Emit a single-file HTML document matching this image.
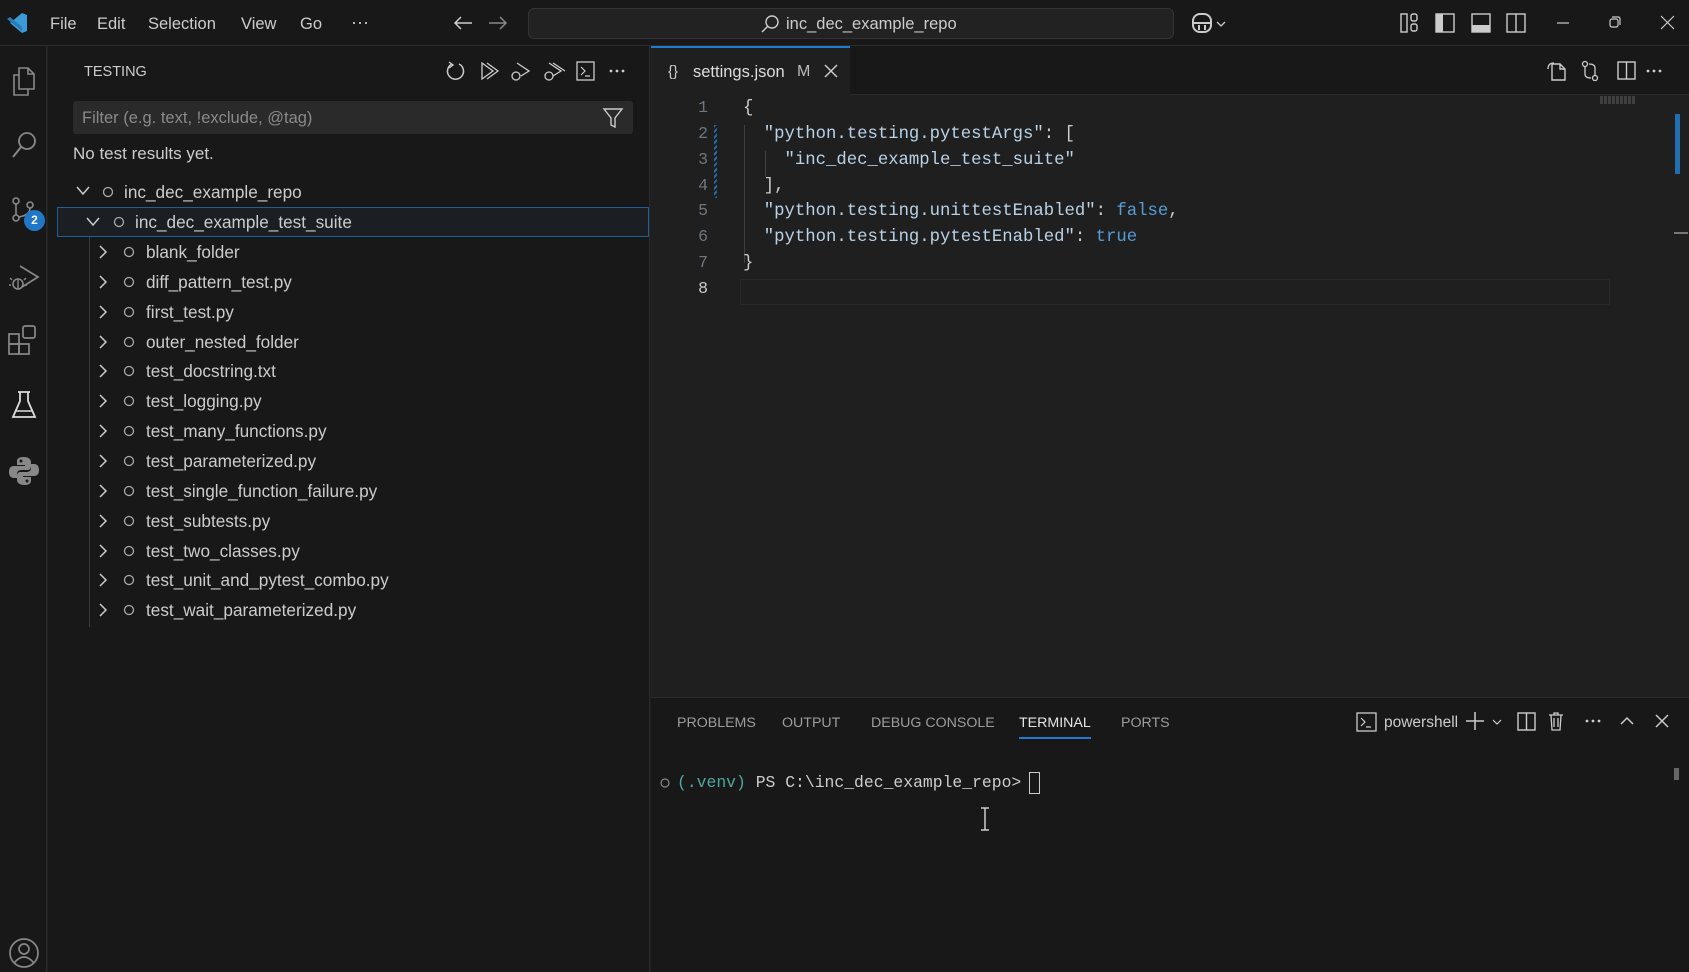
<!DOCTYPE html>
<html><head><meta charset="utf-8"><style>
*{margin:0;padding:0;box-sizing:border-box}
body{width:1689px;height:972px;overflow:hidden;background:#1f1f1f;font-family:"Liberation Sans",sans-serif;color:#ccc;position:relative}
.a{position:absolute}
.t{position:absolute;white-space:nowrap;line-height:1}
svg{position:absolute;overflow:visible}
.mono{font-family:"Liberation Mono",monospace}
</style></head><body>
<!-- title bar -->
<div class="a" style="left:0;top:0;width:1689px;height:46px;background:#181818;border-bottom:1px solid #2b2b2b"></div>
<svg style="left:6px;top:11px" width="22" height="24" viewBox="0 0 22 24"><path d="M16 2 L21 4 V20 L16 22 L4 12 Z M16 7 V17 L9 12 Z" fill="#3b9bd9"/><path d="M1 8 L4 6 L16 16 V20 Z" fill="#2a7ab8"/></svg>
<div class="t" style="left:50px;top:16px;font-size:16.5px;color:#ccc">File</div>
<div class="t" style="left:97px;top:16px;font-size:16.5px;color:#ccc">Edit</div>
<div class="t" style="left:148px;top:16px;font-size:16.5px;color:#ccc">Selection</div>
<div class="t" style="left:241px;top:16px;font-size:16.5px;color:#ccc">View</div>
<div class="t" style="left:300px;top:16px;font-size:16.5px;color:#ccc">Go</div>
<div class="t" style="left:351px;top:13px;font-size:18px;color:#ccc">···</div>
<svg style="left:453px;top:15px" width="20" height="16"><path d="M19 8H2M8 2L2 8L8 14" stroke="#ccc" stroke-width="1.5" fill="none"/></svg>
<svg style="left:488px;top:15px" width="20" height="16"><path d="M1 8H18M12 2L18 8L12 14" stroke="#888" stroke-width="1.5" fill="none"/></svg>
<div class="a" style="left:528px;top:8px;width:646px;height:31px;background:#222;border:1px solid #333;border-radius:6px"></div>
<svg style="left:760px;top:14px" width="20" height="20"><circle cx="12" cy="8" r="6" stroke="#ccc" stroke-width="1.4" fill="none"/><path d="M8 12L2 18" stroke="#ccc" stroke-width="1.5"/></svg>
<div class="t" style="left:786px;top:16px;font-size:16.5px;color:#ccc">inc_dec_example_repo</div>
<svg style="left:1192px;top:12px" width="40" height="22"><rect x="1" y="2" width="18" height="18" rx="7" stroke="#ccc" stroke-width="2" fill="none"/><path d="M1 11H19M7 13V18M13 13V18" stroke="#ccc" stroke-width="2"/><path d="M25 10L29 14L33 10" stroke="#ccc" stroke-width="1.3" fill="none"/></svg>
<svg style="left:1400px;top:13px" width="20" height="20"><rect x="1" y="1" width="6" height="18" stroke="#ccc" stroke-width="1.4" fill="none"/><rect x="11" y="1" width="6" height="7" rx="2" stroke="#ccc" stroke-width="1.4" fill="none"/><rect x="11" y="11" width="6" height="7" rx="2" stroke="#ccc" stroke-width="1.4" fill="none"/></svg>
<svg style="left:1435px;top:13px" width="20" height="20"><rect x="1" y="1" width="18" height="18" stroke="#ccc" stroke-width="1.4" fill="none"/><rect x="1" y="1" width="7" height="18" fill="#ccc"/></svg>
<svg style="left:1471px;top:13px" width="20" height="20"><rect x="1" y="1" width="18" height="18" stroke="#ccc" stroke-width="1.4" fill="none"/><rect x="1" y="12" width="18" height="7" fill="#ccc"/></svg>
<svg style="left:1506px;top:13px" width="20" height="20"><rect x="1" y="1" width="18" height="18" stroke="#ccc" stroke-width="1.4" fill="none"/><path d="M10 1V19" stroke="#ccc" stroke-width="1.4"/></svg>
<svg style="left:1557px;top:22px" width="12" height="2"><path d="M0 1H12" stroke="#ccc" stroke-width="1.2"/></svg>
<svg style="left:1609px;top:16px" width="12" height="12"><rect x="1" y="3" width="8" height="8" rx="2" stroke="#ccc" stroke-width="1.2" fill="none"/><path d="M3 1H9Q11 1 11 3V9" stroke="#ccc" stroke-width="1.2" fill="none"/></svg>
<svg style="left:1661px;top:16px" width="13" height="13"><path d="M0 0L13 13M13 0L0 13" stroke="#ccc" stroke-width="1.2"/></svg>

<!-- activity bar -->
<div class="a" style="left:0;top:46px;width:47px;height:926px;background:#181818;border-right:1px solid #2b2b2b"></div>
<svg style="left:10px;top:67px" width="28" height="30"><path d="M9 1H18L24 7V22H9Z M18 1V7H24" stroke="#888" stroke-width="1.6" fill="none"/><path d="M9 8H4V28H18V22" stroke="#888" stroke-width="1.6" fill="none"/></svg>
<svg style="left:10px;top:130px" width="28" height="30"><circle cx="17" cy="11" r="8" stroke="#888" stroke-width="1.8" fill="none"/><path d="M11 17L3 27" stroke="#888" stroke-width="2"/></svg>
<svg style="left:10px;top:196px" width="30" height="30"><circle cx="6" cy="5" r="3" stroke="#888" stroke-width="1.6" fill="none"/><circle cx="6" cy="22" r="3" stroke="#888" stroke-width="1.6" fill="none"/><circle cx="20" cy="9" r="3" stroke="#888" stroke-width="1.6" fill="none"/><path d="M6 8V19M20 12Q20 19 9 21" stroke="#888" stroke-width="1.6" fill="none"/></svg>
<div class="a" style="left:24px;top:210px;width:21px;height:21px;border-radius:50%;background:#1f77c8;color:#fff;font-size:12px;font-weight:bold;text-align:center;line-height:21px">2</div>
<svg style="left:8px;top:262px" width="32" height="30"><path d="M12 4L30 15L14 25" stroke="#888" stroke-width="1.7" fill="none"/><circle cx="10" cy="22" r="5" stroke="#888" stroke-width="1.6" fill="none"/><path d="M4 18L2 16M16 18L18 16M3 23H1M17 23H19M10 17V27" stroke="#888" stroke-width="1.4"/></svg>
<svg style="left:8px;top:324px" width="32" height="32"><rect x="1" y="10" width="10" height="10" stroke="#888" stroke-width="1.7" fill="none"/><rect x="1" y="20" width="10" height="10" stroke="#888" stroke-width="1.7" fill="none"/><rect x="11" y="20" width="10" height="10" stroke="#888" stroke-width="1.7" fill="none"/><rect x="15" y="2" width="12" height="12" rx="2" stroke="#888" stroke-width="1.7" fill="none"/></svg>
<svg style="left:11px;top:390px" width="26" height="30"><path d="M7 2H19M9 2V11L2 27H24L17 11V2" stroke="#ddd" stroke-width="1.8" fill="none"/><path d="M4 21H22" stroke="#ddd" stroke-width="1.5"/></svg>
<svg style="left:8px;top:455px" width="32" height="32"><path d="M16 2C9 2 9 5 9 7V10H17V11H6C2 11 1 14 1 17C1 21 3 23 6 23H9V19C9 16 11 15 14 15H20C22 15 23 13 23 11V7C23 4 20 2 16 2Z" fill="#888"/><path d="M16 30C23 30 23 27 23 25V22H15V21H26C30 21 31 18 31 15C31 11 29 9 26 9H23V13C23 16 21 17 18 17H12C10 17 9 19 9 21V25C9 28 12 30 16 30Z" fill="#888"/><circle cx="13" cy="6" r="1.5" fill="#181818"/><circle cx="19" cy="26" r="1.5" fill="#181818"/></svg>
<svg style="left:8px;top:937px" width="32" height="32"><circle cx="16" cy="16" r="14" stroke="#888" stroke-width="1.7" fill="none"/><circle cx="16" cy="12" r="5" stroke="#888" stroke-width="1.7" fill="none"/><path d="M6 26Q16 14 26 26" stroke="#888" stroke-width="1.7" fill="none"/></svg>

<!-- sidebar -->
<div class="a" style="left:48px;top:46px;width:602px;height:926px;background:#181818;border-right:1px solid #2b2b2b"></div>
<div class="t" style="left:84px;top:65px;font-size:14.5px;color:#ccc">TESTING</div>
<svg style="left:447px;top:61px" width="180" height="20"><path d="M5 3A8 8 0 1 0 12 3" stroke="#ccc" stroke-width="1.5" fill="none"/><path d="M2 1L6 4L2 7" stroke="#ccc" stroke-width="1.4" fill="none"/>
<path d="M35 2V18L46 10Z M40 2L51 10L40 18" stroke="#ccc" stroke-width="1.3" fill="none"/>
<path d="M70 2L82 10L74 15" stroke="#ccc" stroke-width="1.3" fill="none"/><circle cx="69" cy="15" r="4" stroke="#ccc" stroke-width="1.3" fill="none"/>
<path d="M102 2L114 10L106 15 M106 2L118 10" stroke="#ccc" stroke-width="1.3" fill="none"/><circle cx="102" cy="15" r="4" stroke="#ccc" stroke-width="1.3" fill="none"/>
<rect x="130" y="1" width="17" height="18" stroke="#ccc" stroke-width="1.3" fill="none"/><path d="M134 6L138 10L134 14M138 15H143" stroke="#ccc" stroke-width="1.2" fill="none"/>
<circle cx="164" cy="10" r="1.4" fill="#ccc"/><circle cx="170" cy="10" r="1.4" fill="#ccc"/><circle cx="176" cy="10" r="1.4" fill="#ccc"/></svg>
<div class="a" style="left:73px;top:101px;width:560px;height:33px;background:#2a2a2a;border-radius:3px"></div>
<div class="t" style="left:82px;top:110px;font-size:16.5px;color:#8a8a8a">Filter (e.g. text, !exclude, @tag)</div>
<svg style="left:603px;top:108px" width="20" height="20"><path d="M1 1H19L12 10V19L8 17V10Z" stroke="#ccc" stroke-width="1.4" fill="none"/></svg>
<div class="t" style="left:73px;top:145px;font-size:17px;color:#ccc">No test results yet.</div>
<div class="a" style="left:57px;top:207px;width:592px;height:30px;border:1px solid #1f5f96;background:#1b1f24"></div>
<div class="a" style="left:89px;top:237px;width:1px;height:390px;background:#3a3a3a"></div>
<svg style="left:76px;top:186px" width="14" height="10"><path d="M1 1L7 8L13 1" stroke="#ccc" stroke-width="1.5" fill="none"/></svg>
<svg style="left:102px;top:186px" width="12" height="12"><circle cx="6" cy="6" r="4.5" stroke="#aaa" stroke-width="1.3" fill="none"/></svg>
<div class="t" style="left:124px;top:184px;font-size:17.2px;color:#ccc">inc_dec_example_repo</div>
<svg style="left:86px;top:217px" width="14" height="10"><path d="M1 1L7 8L13 1" stroke="#ccc" stroke-width="1.5" fill="none"/></svg>
<svg style="left:113px;top:216px" width="12" height="12"><circle cx="6" cy="6" r="4.5" stroke="#aaa" stroke-width="1.3" fill="none"/></svg>
<div class="t" style="left:135px;top:214px;font-size:17.2px;color:#ccc">inc_dec_example_test_suite</div>
<div id="tree"></div>

<!-- editor -->
<div class="a" style="left:651px;top:46px;width:1038px;height:49px;background:#181818;border-bottom:1px solid #2b2b2b"></div>
<div class="a" style="left:651px;top:46px;width:199px;height:50px;background:#1f1f1f;border-top:2px solid #1f7ad0"></div>
<div class="t" style="left:668px;top:64px;font-size:15px;color:#ccc">{}</div>
<div class="t" style="left:693px;top:64px;font-size:16.5px;color:#ddd">settings.json</div>
<div class="t" style="left:797px;top:64px;font-size:16px;color:#bbb">M</div>
<svg style="left:825px;top:65px" width="12" height="12"><path d="M0 0L12 12M12 0L0 12" stroke="#ccc" stroke-width="1.5"/></svg>
<svg style="left:1545px;top:60px" width="120" height="22"><path d="M7 4H15L20 9V20H7Z M15 4V9H20" stroke="#ccc" stroke-width="1.4" fill="none"/><path d="M3 9Q3 3 9 3" stroke="#ccc" stroke-width="1.3" fill="none"/>
<circle cx="40" cy="4" r="2.5" stroke="#ccc" stroke-width="1.3" fill="none"/><circle cx="50" cy="18" r="2.5" stroke="#ccc" stroke-width="1.3" fill="none"/><path d="M40 7V14Q40 18 46 18M50 15V8Q50 4 44 4" stroke="#ccc" stroke-width="1.3" fill="none"/>
<rect x="73" y="2" width="17" height="17" stroke="#ccc" stroke-width="1.4" fill="none"/><path d="M81.5 2V19" stroke="#ccc" stroke-width="1.4"/>
<circle cx="103" cy="11" r="1.4" fill="#ccc"/><circle cx="109" cy="11" r="1.4" fill="#ccc"/><circle cx="115" cy="11" r="1.4" fill="#ccc"/></svg>
<div class="a" style="left:740px;top:279px;width:870px;height:26px;border:1px solid #282828"></div>
<div class="a" style="left:714px;top:125px;width:3px;height:73px;background:repeating-linear-gradient(135deg,#1f6fb0 0 2px,transparent 2px 4px)"></div>
<div class="a" style="left:744px;top:125px;width:1px;height:138px;background:#404040"></div>
<div class="a" style="left:765px;top:151px;width:1px;height:26px;background:#404040"></div>
<div class="a" style="left:1675px;top:114px;width:5px;height:60px;background:#1f6fb0"></div>
<div class="a" style="left:1674px;top:232px;width:14px;height:2px;background:#777"></div>
<div class="a" style="left:1600px;top:96px;width:36px;height:8px;background:repeating-linear-gradient(90deg,#555 0 3px,transparent 3px 4px);opacity:.6"></div>
<div id="code" class="mono"></div>

<!-- panel -->
<div class="a" style="left:651px;top:697px;width:1038px;height:275px;background:#181818;border-top:1px solid #2b2b2b"></div>
<div class="t" style="left:677px;top:716px;font-size:14.2px;color:#9d9d9d">PROBLEMS</div>
<div class="t" style="left:782px;top:716px;font-size:14.2px;color:#9d9d9d">OUTPUT</div>
<div class="t" style="left:871px;top:716px;font-size:14.2px;color:#9d9d9d">DEBUG CONSOLE</div>
<div class="t" style="left:1019px;top:716px;font-size:14.2px;color:#e6e6e6">TERMINAL</div>
<div class="a" style="left:1019px;top:737px;width:72px;height:2px;background:#1f7ad0"></div>
<div class="t" style="left:1121px;top:716px;font-size:14.2px;color:#9d9d9d">PORTS</div>
<svg style="left:1356px;top:712px" width="22" height="20"><rect x="1" y="1" width="19" height="18" stroke="#ccc" stroke-width="1.3" fill="none"/><path d="M5 6L9 10L5 14M10 15H15" stroke="#ccc" stroke-width="1.2" fill="none"/></svg>
<div class="t" style="left:1384px;top:715px;font-size:15.5px;color:#ccc">powershell</div>
<svg style="left:1465px;top:711px" width="200" height="22"><path d="M1 10H19M10 1V19" stroke="#ccc" stroke-width="1.5"/><path d="M28 9L32 13L36 9" stroke="#ccc" stroke-width="1.2" fill="none"/>
<rect x="53" y="2" width="17" height="17" stroke="#ccc" stroke-width="1.4" fill="none"/><path d="M61.5 2V19" stroke="#ccc" stroke-width="1.4"/>
<path d="M84 4H98M89 4V2H93V4M86 4L87 19H95L96 4M89 7V16M93 7V16" stroke="#ccc" stroke-width="1.3" fill="none"/>
<circle cx="122" cy="10" r="1.4" fill="#ccc"/><circle cx="128" cy="10" r="1.4" fill="#ccc"/><circle cx="134" cy="10" r="1.4" fill="#ccc"/>
<path d="M156 13L162 7L168 13" stroke="#ccc" stroke-width="1.5" fill="none"/>
<path d="M191 4L203 16M203 4L191 16" stroke="#ccc" stroke-width="1.5"/></svg>
<svg style="left:659px;top:777px" width="12" height="12"><circle cx="6" cy="6" r="4" stroke="#888" stroke-width="1.2" fill="none"/></svg>
<div class="t mono" style="left:677px;top:775px;font-size:16.4px;color:#ccc"><span style="color:#4ea8a0">(.venv)</span> PS C:\inc_dec_example_repo&gt; </div>
<div class="a" style="left:1029px;top:772px;width:11px;height:22px;border:1.5px solid #ccc"></div>
<svg style="left:979px;top:807px" width="12" height="24"><path d="M2 1H10M2 23H10M6 1V23" stroke="#ccc" stroke-width="1.5"/></svg>
<div class="a" style="left:1674px;top:768px;width:5px;height:12px;background:#666"></div>

<script>
var items=["blank_folder","diff_pattern_test.py","first_test.py","outer_nested_folder","test_docstring.txt","test_logging.py","test_many_functions.py","test_parameterized.py","test_single_function_failure.py","test_subtests.py","test_two_classes.py","test_unit_and_pytest_combo.py","test_wait_parameterized.py"];
var h="";
items.forEach(function(s,i){var y=252+i*29.85;
h+='<svg style="left:98px;top:'+(y-7)+'px" width="10" height="14"><path d="M2 1L8 7L2 13" stroke="#ccc" stroke-width="1.5" fill="none"/></svg>';
h+='<svg style="left:123px;top:'+(y-6)+'px" width="12" height="12"><circle cx="6" cy="6" r="4.5" stroke="#aaa" stroke-width="1.3" fill="none"/></svg>';
h+='<div class="t" style="left:146px;top:'+(y-8)+'px;font-size:17.2px;color:#ccc">'+s+'</div>';});
document.getElementById("tree").outerHTML=h;
var K="#b9d2e6",B="#569cd6",P="#ccc";
var lines=[
'<span style="color:'+P+'">{</span>',
'  <span style="color:'+K+'">"python.testing.pytestArgs"</span>: [',
'    <span style="color:'+K+'">"inc_dec_example_test_suite"</span>',
'  ],',
'  <span style="color:'+K+'">"python.testing.unittestEnabled"</span>: <span style="color:'+B+'">false</span>,',
'  <span style="color:'+K+'">"python.testing.pytestEnabled"</span>: <span style="color:'+B+'">true</span>',
'}',''];
var c="";
lines.forEach(function(l,i){var y=100+i*25.85;
c+='<div class="t mono" style="left:684px;width:24px;text-align:right;top:'+y+'px;font-size:16.5px;color:'+(i==7?'#ccc':'#6e7681')+'">'+(i+1)+'</div>';
c+='<div class="t mono" style="left:743px;top:'+y+'px;font-size:17.3px;color:#ccc;white-space:pre">'+l+'</div>';});
document.getElementById("code").outerHTML=c;
</script>
</body></html>
